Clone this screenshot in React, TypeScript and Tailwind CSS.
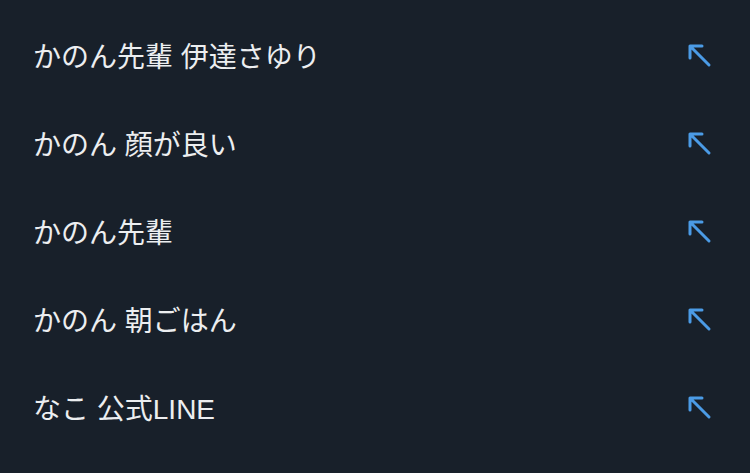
import React from "react";

const items = [
  "かのん先輩 伊達さゆり",
  "かのん 顔が良い",
  "かのん先輩",
  "かのん 朝ごはん",
  "なこ 公式LINE",
];

const ArrowUpLeft: React.FC = () => (
  <svg width="26" height="26" viewBox="0 0 26 26" fill="none">
    <path
      d="M23 23L4 4M4 4V16M4 4H16"
      stroke="#4b9be6"
      strokeWidth="3"
      strokeLinecap="round"
      strokeLinejoin="round"
    />
  </svg>
);

export default function App() {
  return (
    <div
      className="h-[473px] w-[750px] bg-[#18202a] pt-[11px]"
      style={{ fontFamily: '"Liberation Sans", "Noto Sans CJK JP", sans-serif' }}
    >
      {items.map((text, i) => (
        <div key={i} className="flex h-[88px] items-center justify-between pl-[33px] pr-[38px]">
          <span className="pt-[6px] text-[28px] leading-none text-[#eceef0]">{text}</span>
          <ArrowUpLeft />
        </div>
      ))}
    </div>
  );
}
